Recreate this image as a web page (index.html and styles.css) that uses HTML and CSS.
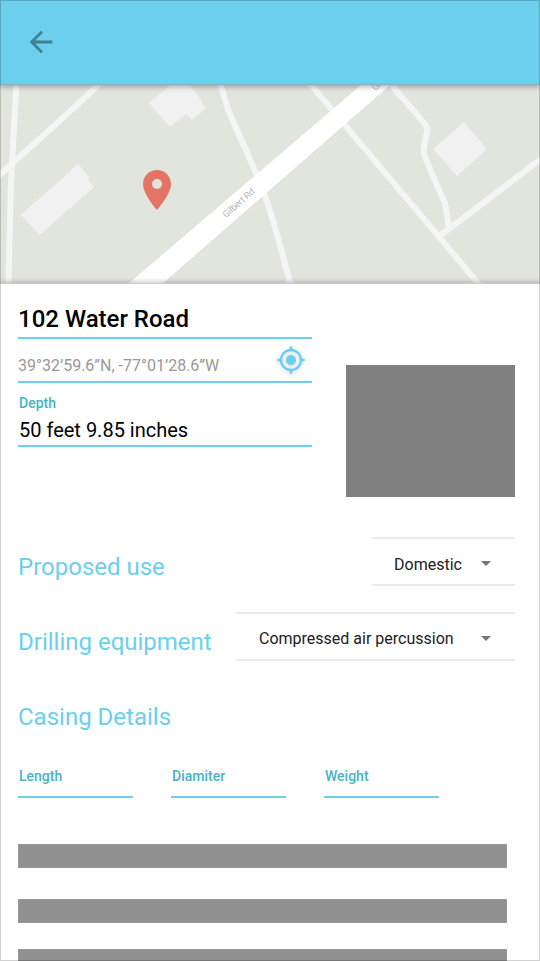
FILE: index.html
```html
<!DOCTYPE html>
<html lang="en">
<head>
<meta charset="utf-8">
<meta name="viewport" content="width=device-width, initial-scale=1">
<title>102 Water Road</title>
<link rel="stylesheet" href="styles.css">
</head>
<body>
<header class="app-bar">
  <button class="back" type="button" aria-label="Back">
    <svg viewBox="0 0 24 24" width="34" height="34"><path d="M20 11H7.830l5.590-5.590L12 4l-8 8 8 8 1.410-1.410L7.830 13H20v-2z"/></svg>
  </button>
</header>
<div class="map">
  <svg viewBox="0 85 540 198" preserveAspectRatio="xMidYMid slice" aria-label="Map">
    <g class="road">
      <path d="M16.500 80C15 120 11.500 160 10.500 200L8.500 286"/>
      <path d="M103 80C75 108 45 134 -4 178"/>
      <path d="M219 80C224 96 226 106 232 119L256 173C268 200 275 226 291 286"/>
      <path d="M307 80L482 288"/>
      <path d="M390 80L394 88L424 123Q428 127 427 131L424 147Q423 152 425 157L442 197Q445 202 446 208L449 229"/>
      <path d="M441 235L545 156"/>
    </g>
    <g class="building">
      <path d="M149 103L170 85H190L202 101L201 103L206 108L192 120L186 114L170 127Z"/>
      <path d="M21 215L78 164L90 178L88 180L94 187L40 235Z"/>
      <path d="M464 122L487 149L457 176L433 149Z"/>
    </g>
    <path class="main-road" d="M128 284L361 85L375 74L403 75L390 85L162 284Z"/>
    <text class="street" transform="translate(226 218) rotate(-41)">Gilbert Rd</text>
    <text class="street" transform="translate(375 91) rotate(-41)">Gilbert Rd</text>
    <path class="pin" fill-rule="evenodd" d="M157 170C149.200 170 143 176.200 143 184C143 194.500 157 210 157 210S171 194.500 171 184C171 176.200 164.800 170 157 170ZM157 179A5 5 0 1 1 157 189A5 5 0 1 1 157 179Z"/>
  </svg>
</div>
<main class="sheet">
  <form>
    <div class="summary">
      <div class="fields">
        <input class="line title" aria-label="Address" value="102 Water Road">
        <div class="line location">
          <input class="coords" aria-label="Coordinates" value="39°32’59.6”N, -77°01’28.6”W">
          <button class="locate" type="button" aria-label="Use my location">
            <svg viewBox="0 0 24 24" width="30" height="30"><path d="M12 8c-2.210 0-4 1.790-4 4s1.790 4 4 4 4-1.790 4-4-1.790-4-4-4zm8.940 3A8.994 8.994 0 0 0 13 3.060V1h-2v2.060A8.994 8.994 0 0 0 3.060 11H1v2h2.060A8.994 8.994 0 0 0 11 20.940V23h2v-2.060A8.994 8.994 0 0 0 20.940 13H23v-2h-2.060zM12 19c-3.870 0-7-3.130-7-7s3.130-7 7-7 7 3.130 7 7-3.130 7-7 7z"/></svg>
          </button>
        </div>
        <label class="caption depth-label" for="depth">Depth</label>
        <input class="line depth" id="depth" value="50 feet 9.85 inches">
      </div>
      <div class="photo"></div>
    </div>
    <div class="row">
      <label class="heading" for="use">Proposed use</label>
      <span class="picker"><select id="use"><option>Domestic</option></select></span>
    </div>
    <div class="row">
      <label class="heading" for="equipment">Drilling equipment</label>
      <span class="picker wide"><select id="equipment"><option>Compressed air percussion</option></select></span>
    </div>
    <div class="row"><h2 class="heading">Casing Details</h2></div>
    <div class="casing">
      <div class="cell"><label class="caption" for="length">Length</label><input class="line small" id="length"></div>
      <div class="cell"><label class="caption" for="diameter">Diamiter</label><input class="line small" id="diameter"></div>
      <div class="cell"><label class="caption" for="weight">Weight</label><input class="line small" id="weight"></div>
    </div>
  </form>
  <div class="bars">
    <div class="bar"></div>
    <div class="bar"></div>
  </div>
  <div class="bars more">
    <div class="bar"></div>
  </div>
</main>
</body>
</html>
```
FILE: styles.css
```css
* { box-sizing: border-box; }

body {
  margin: 0;
  height: 100vh;
  display: flex;
  flex-direction: column;
  overflow: hidden;
  background: #fff;
  color: #000;
  font-family: Roboto, "Liberation Sans", sans-serif;
}

/* Thin frame over the whole window */
body::after {
  content: "";
  position: fixed;
  inset: 0;
  border: 1px solid rgba(0, 0, 0, 0.18);
  pointer-events: none;
  z-index: 5;
}

input, select, button {
  margin: 0;
  padding: 0;
  border: 0;
  border-radius: 0;
  background: none;
  color: inherit;
  font: inherit;
  outline: none;
}

svg { display: block; }

.app-bar {
  position: relative;
  z-index: 2;
  flex: none;
  display: flex;
  align-items: center;
  height: 85px;
  padding: 0 24px;
  background: #6bcfed;
  border-bottom: 1px solid #8bb0bb;
  box-shadow: 0 2px 5px rgba(0, 0, 0, 0.3);
}

.back svg { fill: #437f92; }

.map { flex: none; height: 198px; background: #e2e4de; }
.map svg { width: 100%; height: 100%; }
.road { fill: none; stroke: #f5f5f5; stroke-width: 6; }
.building { fill: #f1f1f1; stroke: #e9e9e8; stroke-width: 0.5; }
.main-road { fill: #fff; }
.street { fill: #8c8c8c; font-size: 9px; font-weight: 300; }
.pin { fill: #e67466; }

.sheet {
  position: relative;
  flex: 1;
  padding: 17px 25px 0 18px;
  background: #fff;
  border-top: 1px solid #ccc;
  box-shadow: 0 -1px 5px rgba(0, 0, 0, 0.25);
}

.summary { display: flex; gap: 34px; align-items: flex-end; }
.fields { flex: 1; min-width: 0; height: 196px; display: flex; flex-direction: column; }
.line { width: 100%; border-bottom: 2px solid #6bcfed; }
.title { height: 38px; font-size: 24px; font-weight: 500; }
.location { display: flex; align-items: center; height: 44px; padding-right: 6px; }
.coords { flex: 1; min-width: 0; height: 24px; margin-top: 10px; font-size: 16px; color: #999; }
.locate svg { fill: #6bcfed; filter: drop-shadow(0 2px 2px rgba(0, 0, 0, 0.15)); }
.caption { padding-left: 1px; font-size: 14px; line-height: 16px; font-weight: 500; color: #47b3c4; }
.depth-label { margin-top: 12px; }
.depth { height: 36px; padding: 4px 0 0 1px; font-size: 20px; }
.photo { width: 169px; height: 132px; background: #808080; }

.row { display: flex; justify-content: space-between; align-items: center; height: 49px; margin-top: 26px; }
.summary + .row { margin-top: 40px; }
.heading { margin: 0; padding-top: 10px; font-size: 24px; line-height: 28px; font-weight: 400; color: #6bcfed; }

.picker { position: relative; height: 49px; border: solid #ebebeb; border-width: 2px 0; }
.picker::after {
  content: "";
  position: absolute;
  right: 24px;
  top: 22px;
  border: solid transparent;
  border-width: 5px 5px 0;
  border-top-color: #757575;
}
.picker select {
  appearance: none;
  width: 100%;
  height: 45px;
  padding: 5px 53px 0 22px;
  font-size: 16px;
  color: #212121;
}
.wide { width: 279px; }
.wide select { padding: 4px 53px 0 23px; }

.casing { display: flex; gap: 38px; margin-top: 32px; padding-right: 76px; }
.cell { flex: 1; min-width: 0; display: flex; flex-direction: column; }
.small { height: 14px; }

.bars { display: flex; flex-direction: column; gap: 31px; margin: 46px 8px 0 0; }
.more { margin-top: 26px; }
.bar { height: 24px; background: #919191; border: 1px solid #979797; }
```
